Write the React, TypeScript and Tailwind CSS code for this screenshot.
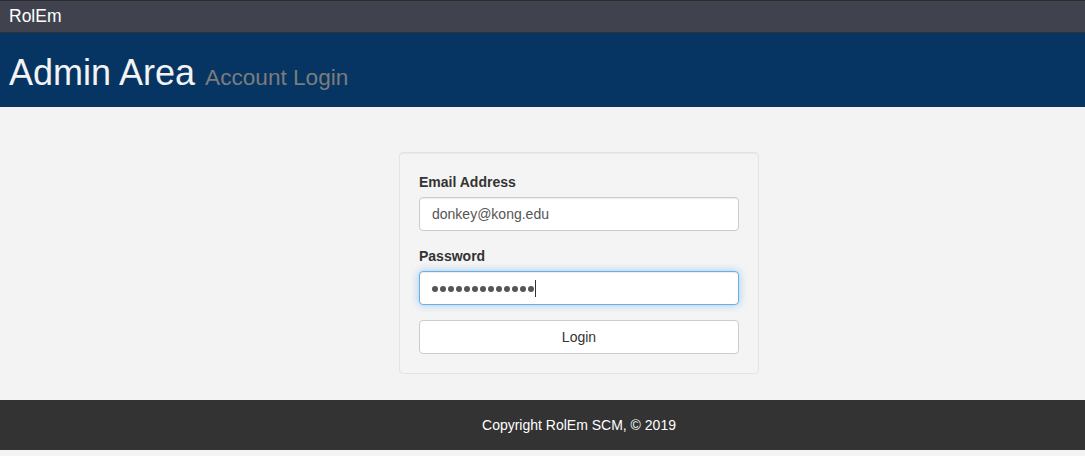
import React from "react";

function Field({ label, children }: { label: string; children: React.ReactNode }) {
  return (
    <div className="mb-[15px]">
      <label className="block mb-[5px] text-[14px] leading-[20px] font-bold text-[#333]">{label}</label>
      {children}
    </div>
  );
}

const dots = Array.from({ length: 13 });

export default function App() {
  return (
    <div className="min-h-[456px] bg-[#f3f3f3] font-['Liberation_Sans',Arial,sans-serif]">
      {/* top bar */}
      <div className="h-[33px] bg-[#40434e] border-t border-[#2c2c2c] border-b border-b-[#2f323a] flex items-center px-[9px]">
        <span className="text-white text-[17.5px] leading-none">RolEm</span>
      </div>

      {/* page header */}
      <div className="h-[74px] bg-[#063563] flex items-end px-[9px] pb-[16px]">
        <h1 className="text-[36px] leading-none text-[#f3f3f3]">
          Admin Area <small className="text-[22.6px] text-[#7c7c7c]">Account Login</small>
        </h1>
      </div>

      {/* login */}
      <div className="flex justify-center pl-[73px] pt-[45px] pb-[26px]">
        <div className="w-[360px] p-[19px] bg-[#f4f4f4] border border-[#e3e3e3] rounded-[4px] shadow-[inset_0_1px_1px_rgba(0,0,0,0.05)]">
          <Field label="Email Address">
            <div className="h-[34px] px-[12px] flex items-center bg-white border border-[#ccc] rounded-[4px] shadow-[inset_0_1px_1px_rgba(0,0,0,0.075)] text-[14px] text-[#555]">
              donkey@kong.edu
            </div>
          </Field>
          <Field label="Password">
            <div className="h-[34px] px-[12px] flex items-center bg-white border border-[#66afe9] rounded-[4px] shadow-[inset_0_1px_1px_rgba(0,0,0,0.075),0_0_8px_rgba(102,175,233,0.6)]">
              <div className="flex items-center gap-[2px] mt-[2px]">
                {dots.map((_, i) => (
                  <span key={i} className="w-[6px] h-[6px] rounded-full bg-[#555]" />
                ))}
              </div>
              <span className="ml-[1px] w-px h-[17px] bg-[#333]" />
            </div>
          </Field>
          <button className="w-full h-[34px] bg-white border border-[#ccc] rounded-[4px] text-[14px] text-[#333]">
            Login
          </button>
        </div>
      </div>

      {/* footer */}
      <div className="h-[50px] bg-[#333] flex items-center justify-center pl-[73px]">
        <span className="text-[14px] text-white">Copyright RolEm SCM, © 2019</span>
      </div>
    </div>
  );
}
